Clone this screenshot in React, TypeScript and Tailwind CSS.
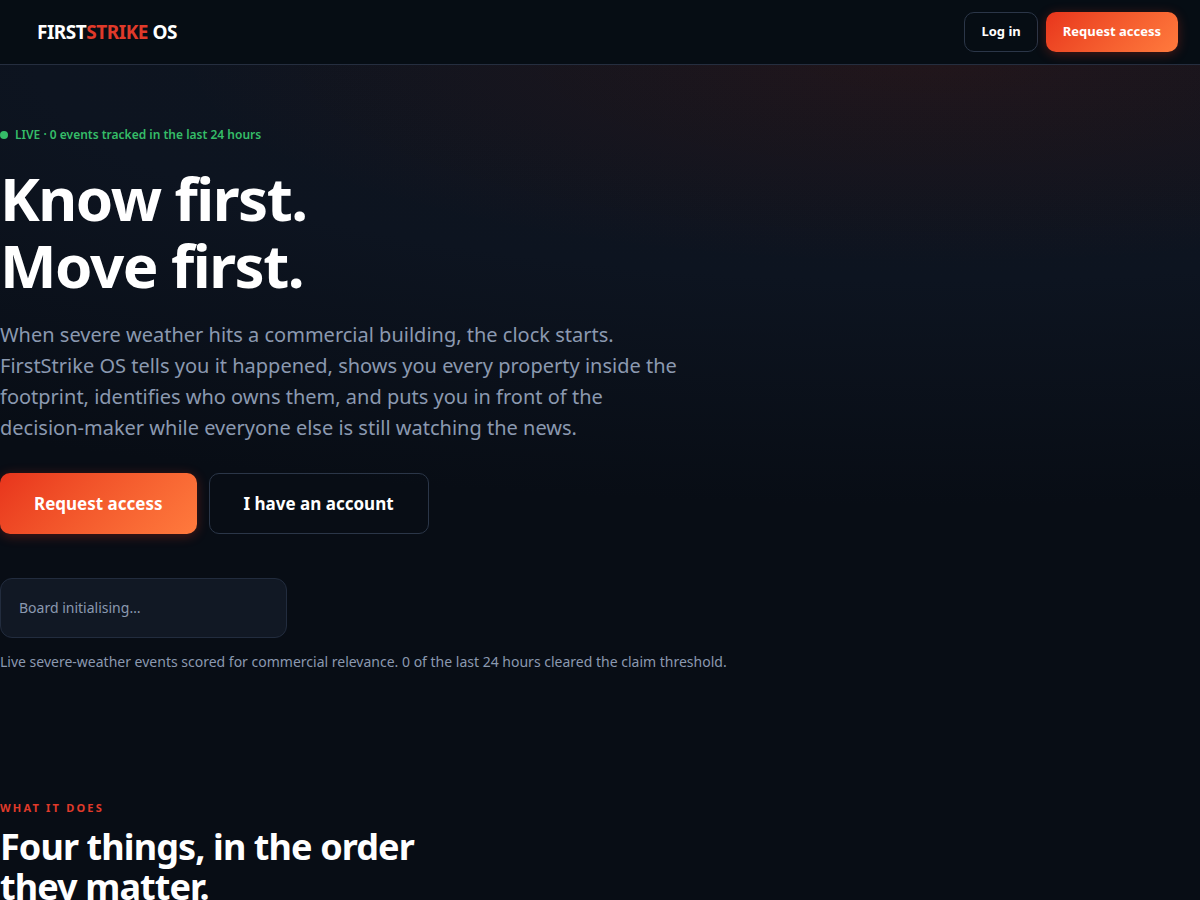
import React from 'react';

interface ButtonProps {
  variant: 'primary' | 'outline';
  size: 'sm' | 'lg';
  children: React.ReactNode;
}

const sizes = {
  sm: { primary: 'h-10 px-4 text-[13px]', outline: 'h-10 px-4 text-[13px]' },
  lg: { primary: 'h-[61px] px-[33px] text-[17px]', outline: 'h-[61px] px-[34px] text-[17px]' },
};

const variants = {
  primary:
    'border-transparent bg-origin-border bg-linear-135 from-[#e8341c] to-[#ff7a3d] shadow-[0_2px_12px_rgba(232,52,28,0.3)]',
  outline: 'border-[#2b3648] bg-transparent',
};

function Button({ variant, size, children }: ButtonProps) {
  return (
    <button
      type="button"
      className={`rounded-[10px] border font-bold text-white whitespace-nowrap ${sizes[size][variant]} ${variants[variant]}`}
    >
      {children}
    </button>
  );
}

export default function App() {
  return (
    <div className="h-screen overflow-hidden flex flex-col bg-[#080d15] font-['Noto_Sans',sans-serif] text-white">
      {/* Top bar */}
      <header className="shrink-0 h-[65px] flex items-center justify-between pl-[37px] pr-[22px] border-b border-[#252e3f] bg-[#060d14]">
        <a href="#" className="text-[19px] leading-7 font-bold tracking-tight">
          FIRST<span className="text-[#e03a2a]">STRIKE</span> OS
        </a>
        <nav className="flex items-center gap-2">
          <Button variant="outline" size="sm">Log in</Button>
          <Button variant="primary" size="sm">Request access</Button>
        </nav>
      </header>

      <main>
        {/* Hero */}
        <section className="pt-[60px] pb-16 bg-[radial-gradient(760px_210px_at_78%_-10px,rgba(210,30,0,0.10),transparent),radial-gradient(1800px_450px_at_78%_-10px,#0e151e_0%,#0d1420_50%,transparent_100%)]">
          <p className="flex items-center gap-[7px] text-xs leading-5 font-semibold text-[#35bd68]">
            <span className="w-2 h-2 rounded-full bg-[#35bd68]"></span>
            LIVE · 0 events tracked in the last 24 hours
          </p>

          <h1 className="mt-5 text-[60px] leading-[67px] font-bold tracking-tight">
            Know first.
            <br />
            Move first.
          </h1>

          <p className="mt-5 max-w-[680px] text-xl leading-[31px] text-[#8b99b0]">
            When severe weather hits a commercial building, the clock starts. FirstStrike OS tells you it happened,
            shows you every property inside the footprint, identifies who owns them, and puts you in front of the
            decision-maker while everyone else is still watching the news.
          </p>

          <div className="mt-[30px] flex gap-3">
            <Button variant="primary" size="lg">Request access</Button>
            <Button variant="outline" size="lg">I have an account</Button>
          </div>

          {/* Live board placeholder */}
          <div className="mt-11 w-[287px] h-[60px] px-[18px] flex items-center rounded-xl border border-[#222c3e] bg-[#111824] text-sm text-[#8b99b0]">
            Board initialising…
          </div>
          <p className="mt-[14px] text-sm leading-5 text-[#8b99b0]">
            Live severe-weather events scored for commercial relevance. 0 of the last 24 hours cleared the claim
            threshold.
          </p>
        </section>

        {/* What it does */}
        <section className="pt-16">
          <p className="text-[11px] leading-4 font-bold tracking-[0.2em] text-[#e03a2a]">WHAT IT DOES</p>
          <h2 className="mt-[11px] max-w-[520px] text-4xl font-bold tracking-tight">
            Four things, in the order
            <br />
            they matter.
          </h2>
        </section>
      </main>
    </div>
  );
}
